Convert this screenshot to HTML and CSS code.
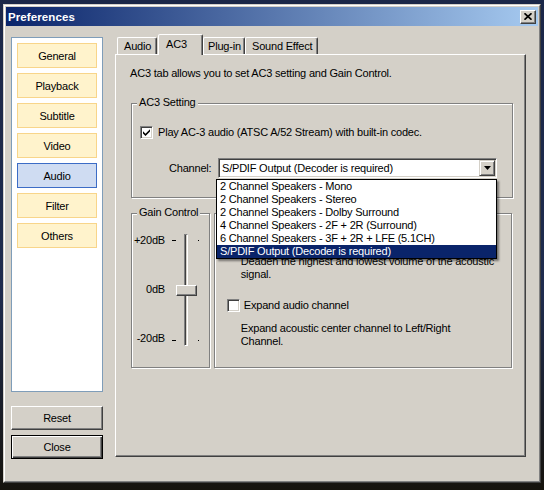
FILE: index.html
```html
<!DOCTYPE html>
<html>
<head>
<meta charset="utf-8">
<title>Preferences</title>
<link rel="stylesheet" href="styles.css">
</head>
<body>
<div class="desktop">
  <div class="window">
    <div class="frame">
      <div class="titlebar">
        <span class="title">Preferences</span>
        <div class="close-btn">
          <svg width="8" height="7" viewBox="0 0 8 7"><path d="M0.5 0.3 L7.5 6.7 M7.5 0.3 L0.5 6.7" stroke="#000" stroke-width="1.7" fill="none"/></svg>
        </div>
      </div>
      <div class="client">
        <div class="sidebar">
          <div class="nav-list">
            <div class="nav-item">General</div>
            <div class="nav-item">Playback</div>
            <div class="nav-item">Subtitle</div>
            <div class="nav-item">Video</div>
            <div class="nav-item selected">Audio</div>
            <div class="nav-item">Filter</div>
            <div class="nav-item">Others</div>
          </div>
          <div class="btn btn-reset">Reset</div>
          <div class="btn btn-default">Close</div>
        </div>
        <div class="tabs-area">
          <div class="tab-strip">
            <div class="tab tab-audio">Audio</div>
            <div class="tab tab-ac3">AC3</div>
            <div class="tab tab-plugin">Plug-in</div>
            <div class="tab tab-sound">Sound Effect</div>
          </div>
          <div class="tab-panel">
            <p class="desc">AC3 tab allows you to set AC3 setting and Gain Control.</p>
            <div class="group ac3-group">
              <div class="group-label">AC3 Setting</div>
              <div class="check-row ac3-check">
                <span class="checkbox"><svg width="7" height="7" viewBox="0 0 7 7"><polygon points="0,2.3 2.5,4.8 7,0.3 7,2.5 2.5,7 0,4.5" fill="#000"/></svg></span>
                <span>Play AC-3 audio (ATSC A/52 Stream) with built-in codec.</span>
              </div>
              <div class="channel-row">
                <span class="channel-label">Channel:</span>
                <div class="combo">
                  <span class="combo-text">S/PDIF Output (Decoder is required)</span>
                  <span class="combo-btn"><svg width="7" height="4" viewBox="0 0 7 4"><polygon points="0,0 7,0 3.5,4" fill="#000"/></svg></span>
                  <div class="dropdown">
                    <div class="dd-item">2 Channel Speakers - Mono</div>
                    <div class="dd-item">2 Channel Speakers - Stereo</div>
                    <div class="dd-item">2 Channel Speakers - Dolby Surround</div>
                    <div class="dd-item">4 Channel Speakers - 2F + 2R (Surround)</div>
                    <div class="dd-item">6 Channel Speakers - 3F + 2R + LFE (5.1CH)</div>
                    <div class="dd-item sel">S/PDIF Output (Decoder is required)</div>
                  </div>
                </div>
              </div>
            </div>
            <div class="lower-row">
              <div class="group gain-group">
                <div class="group-label">Gain Control</div>
                <div class="gain-body">
                  <div class="gain-labels">
                    <span>+20dB</span>
                    <span>0dB</span>
                    <span>-20dB</span>
                  </div>
                  <div class="slider">
                    <div class="tick-l tick-top"></div>
                    <div class="tick-l tick-bottom"></div>
                    <div class="tick-r tick-top"></div>
                    <div class="tick-r tick-bottom"></div>
                    <div class="track"></div>
                    <div class="thumb"></div>
                  </div>
                </div>
              </div>
              <div class="group effect-group">
                <div class="check-row effect-check1">
                  <span class="checkbox"></span>
                </div>
                <p class="effect-text first-text">Deaden the highest and lowest volume of the acoustic<br>signal.</p>
                <div class="check-row effect-check2">
                  <span class="checkbox"></span>
                  <span>Expand audio channel</span>
                </div>
                <p class="effect-text second-text">Expand acoustic center channel to Left/Right<br>Channel.</p>
              </div>
            </div>
          </div>
        </div>
      </div>
    </div>
  </div>
</div>
</body>
</html>
```

FILE: styles.css
```css
* { box-sizing: border-box; }

body {
  margin: 0;
  width: 544px;
  height: 490px;
  overflow: hidden;
  background: linear-gradient(180deg, #1b2748 0%, #1f2c4e 60%, #16130d 100%);
  font-family: "Liberation Sans", Arial, sans-serif;
  font-size: 11px;
  letter-spacing: -0.2px;
  color: #000;
}

.desktop { padding: 4px 0 0 3px; }

.window {
  width: 538px;
  height: 479px;
  border: 1px solid;
  border-color: #d4d0c8 #404040 #404040 #d4d0c8;
  background: #d4d0c8;
}

.frame {
  height: 100%;
  border: 1px solid;
  border-color: #fff #808080 #808080 #fff;
  padding: 1px;
  display: flex;
  flex-direction: column;
}

.titlebar {
  height: 19px;
  flex: none;
  background: linear-gradient(90deg, #0a246a 0%, #a6caf0 100%);
  display: flex;
  align-items: center;
  justify-content: space-between;
  padding: 0 2px 0 2px;
}

.title {
  color: #fff;
  font-weight: bold;
  font-size: 11.5px;
  letter-spacing: 0.1px;
}

.close-btn {
  width: 16px;
  height: 14px;
  border: 1px solid;
  border-color: #fff #404040 #404040 #fff;
  box-shadow: inset -1px -1px #808080;
  background: #d4d0c8;
  display: flex;
  align-items: center;
  justify-content: center;
}

.close-btn svg { display: block; }

.client {
  flex: 1;
  display: flex;
  gap: 12px;
  padding: 8px 12px 0 5px;
}

/* sidebar */
.sidebar {
  width: 92px;
  flex: none;
  display: flex;
  flex-direction: column;
}

.nav-list {
  margin-top: 3px;
  height: 355px;
  background: #fff;
  border: 1px solid #7f9db9;
  padding: 5px 0 0 5px;
  display: flex;
  flex-direction: column;
  gap: 5px;
}

.nav-item {
  width: 80px;
  height: 25px;
  border: 1px solid #f8d58a;
  background: #fff3cc;
  display: flex;
  align-items: center;
  justify-content: center;
}

.nav-item.selected {
  background: #cfdcf2;
  border-color: #3c6cc6;
}

.btn {
  width: 92px;
  height: 24px;
  display: flex;
  align-items: center;
  justify-content: center;
  background: #d4d0c8;
}

.btn-reset {
  margin-top: 14px;
  border: 1px solid;
  border-color: #fff #404040 #404040 #fff;
  box-shadow: inset -1px -1px #808080;
}

.btn-default {
  margin-top: 5px;
  border: 1px solid #000;
  box-shadow: inset 1px 1px #fff, inset -1px -1px #404040, inset -2px -2px #808080;
}

/* tabs */
.tabs-area {
  width: 411px;
  flex: none;
  display: flex;
  flex-direction: column;
}

.tab-strip {
  height: 20px;
  display: flex;
  align-items: flex-end;
  padding-left: 2px;
}

.tab {
  height: 17px;
  border: 1px solid;
  border-bottom: none;
  border-color: #fff #404040 transparent #fff;
  border-radius: 2px 2px 0 0;
  box-shadow: inset -1px 0 #808080;
  display: flex;
  align-items: center;
  padding-left: 6px;
  white-space: nowrap;
}

.tab-audio { width: 40px; }

.tab-ac3 {
  width: 45px;
  height: 21px;
  margin-left: 1px;
  margin-bottom: -1px;
  padding-left: 7px;
  padding-bottom: 2px;
  position: relative;
  z-index: 1;
  background: #d4d0c8;
}

.tab-plugin { width: 42px; padding-left: 4px; }
.tab-sound { width: 73px; }

.tab-panel {
  height: 403px;
  border: 1px solid;
  border-color: #fff #404040 #404040 #fff;
  box-shadow: inset -1px -1px #808080;
  padding: 12px 13px 0 15px;
}

.desc {
  margin: 0 0 0 -1px;
  line-height: 13px;
}

/* group boxes */
.group {
  border: 1px solid #808080;
  box-shadow: inset 1px 1px #fff, 1px 1px #fff;
  display: flex;
  flex-direction: column;
}

.group-label {
  align-self: flex-start;
  margin: -8px 0 0 5px;
  padding: 0 2px;
  background: #d4d0c8;
  line-height: 13px;
}

.ac3-group {
  margin-top: 23px;
  width: 382px;
  height: 95px;
}

.check-row {
  display: flex;
  align-items: center;
  gap: 5px;
  height: 13px;
  line-height: 13px;
  white-space: nowrap;
}

.ac3-check { margin: 17px 0 0 8px; }

.checkbox {
  width: 13px;
  height: 13px;
  flex: none;
  background: #fff;
  border: 1px solid;
  border-color: #808080 #fff #fff #808080;
  box-shadow: inset 1px 1px #404040, inset -1px -1px #d4d0c8;
  display: flex;
  align-items: center;
  justify-content: center;
}

.checkbox svg { display: block; }

.channel-row {
  display: flex;
  align-items: center;
  gap: 6px;
  margin: 19px 0 0 37px;
}

.channel-label { width: 43px; }

.combo {
  position: relative;
  width: 279px;
  height: 20px;
  background: #fff;
  border: 1px solid;
  border-color: #808080 #fff #fff #808080;
  box-shadow: inset 1px 1px #404040, inset -1px -1px #d4d0c8;
  display: flex;
  align-items: center;
  padding: 1px 1px 1px 3px;
}

.combo-text { white-space: nowrap; }

.combo-btn {
  margin-left: auto;
  width: 16px;
  height: 16px;
  flex: none;
  border: 1px solid;
  border-color: #d4d0c8 #404040 #404040 #d4d0c8;
  box-shadow: inset 1px 1px #fff, inset -1px -1px #808080;
  background: #d4d0c8;
  display: flex;
  align-items: center;
  justify-content: center;
}

.combo-btn svg { display: block; }

.dropdown {
  position: absolute;
  left: -3px;
  top: 20px;
  width: 281px;
  height: 80px;
  background: #fff;
  border: 1px solid #000;
  box-shadow: 2px 2px 2px rgba(0, 0, 0, 0.45);
  z-index: 5;
}

.dd-item {
  height: 13px;
  line-height: 13px;
  padding-left: 3px;
  white-space: nowrap;
}

.dd-item.sel {
  background: #0a246a;
  color: #fff;
}

/* lower groups */
.lower-row {
  display: flex;
  gap: 4px;
  margin-top: 15px;
}

.gain-group { width: 79px; height: 155px; }
.effect-group { width: 299px; height: 155px; }

.gain-body {
  display: flex;
  margin-top: 15px;
}

.gain-labels {
  width: 33px;
  display: flex;
  flex-direction: column;
  align-items: flex-end;
  gap: 36px;
  line-height: 13px;
}

.slider {
  position: relative;
  width: 29px;
  height: 112px;
  margin-left: 6px;
}

.track {
  position: absolute;
  left: 13px;
  top: 0;
  width: 4px;
  height: 112px;
  border: 1px solid;
  border-color: #808080 #fff #fff #808080;
  background: linear-gradient(90deg, #404040 50%, #d4d0c8 50%);
}

.thumb {
  position: absolute;
  left: 5px;
  top: 51px;
  width: 21px;
  height: 11px;
  border: 1px solid;
  border-color: #fff #404040 #404040 #fff;
  box-shadow: inset -1px -1px #808080;
  background: #d4d0c8;
}

.tick-l {
  position: absolute;
  left: 1px;
  width: 4px;
  height: 1px;
  background: #000;
}

.tick-r {
  position: absolute;
  left: 27px;
  width: 1px;
  height: 1px;
  background: #000;
}

.tick-top { top: 6px; }
.tick-bottom { top: 106px; }

.effect-check1 { margin: 18px 0 0 12px; }
.effect-check2 { margin: 18px 0 0 12px; gap: 4px; }

.effect-text {
  margin: 10px 0 0 26px;
  line-height: 13px;
  white-space: nowrap;
}
```
